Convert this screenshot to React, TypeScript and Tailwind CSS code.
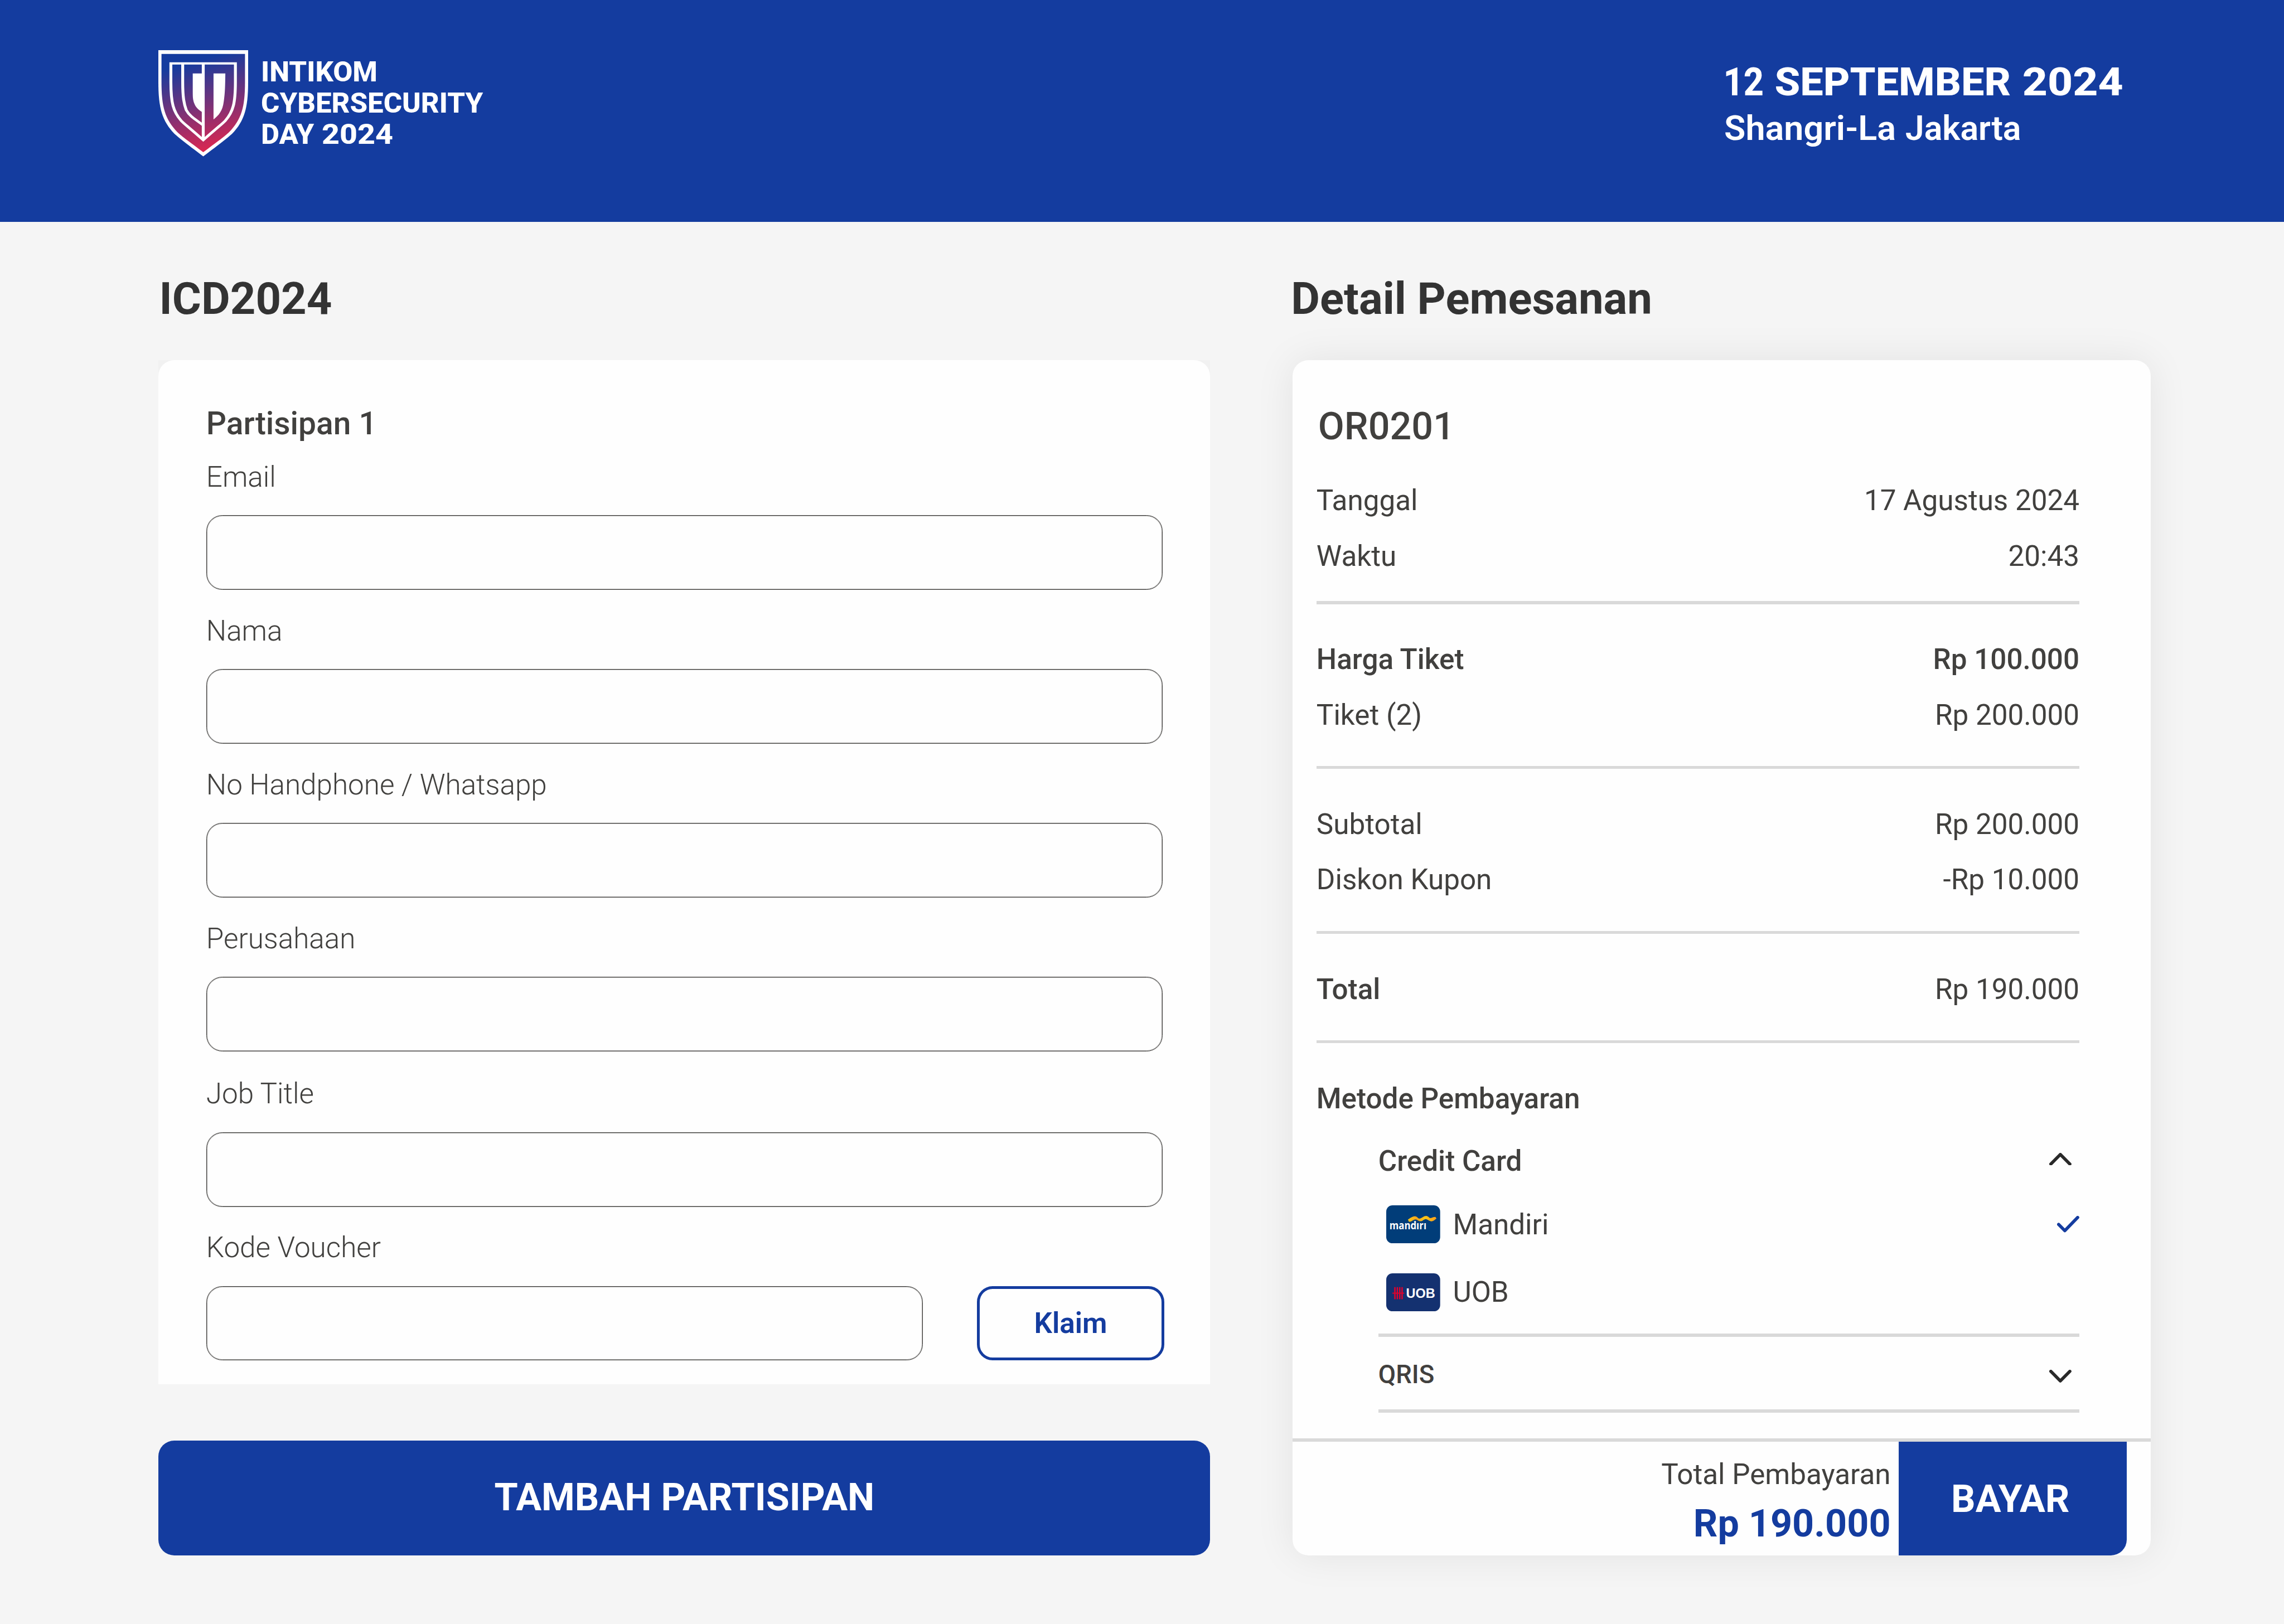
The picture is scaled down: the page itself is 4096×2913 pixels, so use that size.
import React from "react";

const fields = [
  { label: "Email" },
  { label: "Nama" },
  { label: "No Handphone / Whatsapp" },
  { label: "Perusahaan" },
];

function Shield() {
  return (
    <svg className="h-[67px] w-[56.6px] shrink-0" viewBox="0 0 402 603" preserveAspectRatio="none">
      <defs>
        <linearGradient id="shield" gradientUnits="userSpaceOnUse" x1="110" y1="80" x2="270" y2="560">
          <stop offset="0" stopColor="#143c9f" />
          <stop offset="1" stopColor="#dd2750" />
        </linearGradient>
      </defs>
      <path d="M0 0H402V180C402 330 385 400 330 475C315 492 300 508 201 603C102 508 87 492 72 475C17 400 0 330 0 180Z" fill="#fff" />
      <path d="M14 21H388V180C388 325 372 390 317 465C300 485 285 500 201 579C117 500 102 485 85 465C30 390 14 325 14 180Z" fill="url(#shield)" />
      <path d="M56 75H345V180C345 300 335 350 300 400C285 420 270 432 201 510C132 432 117 420 102 400C67 350 56 300 56 180Z" fill="none" stroke="#fff" strokeWidth="13" />
      <path d="M201 70V510" stroke="#fff" strokeWidth="13" />
      <path d="M109 76V180C109 270 115 305 125 340C137 368 150 380 201 426" fill="none" stroke="#fff" strokeWidth="13" />
      <path d="M154 132H201V356C175 335 168 325 160 300C154 280 154 260 154 230Z" fill="#fff" />
      <path d="M247 132H300C299 200 299 240 293 290C288 345 270 370 247 393Z" fill="#fff" />
    </svg>
  );
}

function LogoText() {
  return (
    <svg className="h-[70px] w-[150px]" viewBox="0 -8 150 70">
      <g fill="#fff" fontFamily="'Roboto', sans-serif" fontWeight="800" fontSize="17.4">
        <text x="0" y="13.3" textLength="73.5" lengthAdjust="spacingAndGlyphs">INTIKOM</text>
        <text x="0" y="33.1" textLength="140" lengthAdjust="spacingAndGlyphs">CYBERSECURITY</text>
        <text y="52.8">
          <tspan x="0" textLength="33.5" lengthAdjust="spacingAndGlyphs">DAY</tspan>{" "}
          <tspan x="38.3" textLength="45" lengthAdjust="spacingAndGlyphs">2024</tspan>
        </text>
      </g>
    </svg>
  );
}

function EventText() {
  return (
    <svg className="h-[70px] w-[260px]" viewBox="0 -8 260 70">
      <g fill="#fff" fontFamily="'Roboto', sans-serif">
        <text y="22.3" fontSize="24.7" fontWeight="800">
          <tspan x="-0.5" textLength="25.5" lengthAdjust="spacingAndGlyphs">12</tspan>{" "}
          <tspan x="31.8" textLength="149" lengthAdjust="spacingAndGlyphs">SEPTEMBER</tspan>{" "}
          <tspan x="188" textLength="63.6" lengthAdjust="spacingAndGlyphs">2024</tspan>
        </text>
        <text y="50.2" fontSize="21.3" fontWeight="600">
          <tspan x="0" textLength="108.3" lengthAdjust="spacingAndGlyphs">Shangri-La</tspan>{" "}
          <tspan x="114.2" textLength="73" lengthAdjust="spacingAndGlyphs">Jakarta</tspan>
        </text>
      </g>
    </svg>
  );
}

function Field({ label }: { label: string }) {
  return (
    <label className="flex flex-col">
      <span className="h-[35px] pt-[0.4px] text-[18px] leading-[21px] font-light">{label}</span>
      <input className="h-[47px] w-full rounded-[10px] border-[0.5px] border-[#41403e] bg-transparent px-4 shadow-[inset_0_0_0_0.36px_rgba(65,64,62,0.5)] outline-none" />
    </label>
  );
}

function Row({ left, right, boldLeft, boldRight }: { left: string; right: string; boldLeft?: boolean; boldRight?: boolean }) {
  return (
    <div className="flex h-[35px] items-center justify-between">
      <span className={boldLeft ? "font-medium" : ""}>{left}</span>
      <span className={boldRight ? "font-medium" : ""}>{right}</span>
    </div>
  );
}

function Divider() {
  return <div className="h-[2px] w-full shrink-0 bg-[#d9d9d9]" />;
}

function MandiriBadge() {
  return (
    <svg className="h-6 w-[34px]" viewBox="0 0 102 72">
      <defs>
        <linearGradient id="ribbon" x1="0" x2="1" y1="0" y2="0">
          <stop offset="0" stopColor="#fdc916" />
          <stop offset="0.3" stopColor="#fba61b" />
          <stop offset="0.6" stopColor="#fdc516" />
          <stop offset="1" stopColor="#f99d1c" />
        </linearGradient>
      </defs>
      <rect width="102" height="72" rx="12" fill="#013d79" />
      <path d="M41 27C47 23 51 20 56 21C60 22 60 26 64 25C69 23 71 20 76 20C81 21 81 25 85 24C88 23 90 22 93 22L95 25C91 28 88 31 84 30C80 29 78 26 74 26C70 27 68 31 63 30C59 29 58 26 54 27C50 28 47 32 43 31Z" fill="url(#ribbon)" />
      <text x="6" y="45.7" textLength="70" lengthAdjust="spacingAndGlyphs" fontFamily="'Open Sans', sans-serif" fontWeight="700" fontSize="20.5" fill="#fff">mandırı</text>
    </svg>
  );
}

function UobBadge() {
  return (
    <svg className="h-6 w-[34px]" viewBox="0 0 102 72">
      <rect width="102" height="72" rx="12" fill="#143170" />
      <path d="M16.4 26V49M21 26V49M25.6 26V49M30 26V49" stroke="#e4002b" strokeWidth="2.6" />
      <path d="M11.5 37.5H34" stroke="#e4002b" strokeWidth="2" />
      <text x="37.5" y="46.5" textLength="55" lengthAdjust="spacingAndGlyphs" fontFamily="'Liberation Sans', sans-serif" fontWeight="700" fontSize="26" fill="#fff">UOB</text>
    </svg>
  );
}

function Chevron({ up }: { up?: boolean }) {
  return (
    <svg className="mr-[5px] h-2 w-[14px]" viewBox="0 0 14 8" fill="none" stroke="#292929" strokeWidth="2" strokeLinecap="round" strokeLinejoin="round">
      <path d={up ? "M1 7L7 1L13 7" : "M1 1L7 7L13 1"} />
    </svg>
  );
}

export default function App() {
  return (
    <div className="h-[2913px] w-[4096px] overflow-hidden bg-[#f5f5f5]">
      <div className="flex h-[1025px] w-[1440px] flex-col font-['Roboto',sans-serif] text-[18px] leading-[21px] text-[#41403e] [zoom:2.84444]">
        <header className="flex h-[140px] shrink-0 items-start justify-between bg-[#143c9f] pr-[93px] pl-[100px]">
          <div className="flex pt-[31.7px]">
            <Shield />
            <div className="-mt-[1.7px] ml-[8px]">
              <LogoText />
            </div>
          </div>
          <div className="pt-[30px]">
            <EventText />
          </div>
        </header>

        <main className="flex grow items-start">
          <section className="ml-[100px] w-[663px]">
            <h1 className="mt-[32px] ml-[0.4px] h-[55px] text-[28px] leading-[33px] font-bold text-[#333]">ICD2024</h1>
            <div className="bg-[#f1f1f1]">
              <div className="flex h-[646px] flex-col rounded-t-[10px] bg-[#fefefe] px-[30px] pt-[28px]">
                <h2 className="h-[35px] pt-[0.4px] text-[20px] leading-[24px] font-medium">Partisipan 1</h2>
                <div className="flex flex-col gap-[15px]">
                  {fields.map((f) => (
                    <Field key={f.label} label={f.label} />
                  ))}
                  <div className="pt-px">
                    <Field label="Job Title" />
                  </div>
                  <div className="flex items-end justify-between">
                    <div className="w-[452px]">
                      <Field label="Kode Voucher" />
                    </div>
                    <button className="-mr-px h-[47px] w-[118px] rounded-[10px] border-2 border-[#143c9f] pt-[0.4px] font-semibold text-[#143c9f]">Klaim</button>
                  </div>
                </div>
              </div>
            </div>
            <button className="mt-[35.4px] h-[72.6px] w-full rounded-[10px] bg-[#143c9f] text-[24px] font-bold text-white">TAMBAH PARTISIPAN</button>
          </section>

          <section className="ml-[52px] w-[541px]">
            <h1 className="mt-[32px] -ml-px h-[55px] text-[28px] leading-[33px] font-bold text-[#333]">Detail Pemesanan</h1>
            <div className="flex h-[754px] flex-col rounded-[10px] bg-[#fefefe] shadow-[0_0_25px_rgba(0,0,0,0.08)]">
              <div className="flex h-[680px] flex-col pr-[45px] pl-[15px]">
                <h2 className="mt-[27.5px] ml-px h-[43.8px] text-[24px] leading-[29px] font-medium">OR0201</h2>
                <Row left="Tanggal" right="17 Agustus 2024" />
                <Row left="Waktu" right="20:43" />
                <div className="h-[10.7px]" />
                <Divider />
                <div className="h-[17.4px]" />
                <Row left="Harga Tiket" right="Rp 100.000" boldLeft boldRight />
                <Row left="Tiket (2)" right="Rp 200.000" />
                <div className="h-[14.6px]" />
                <Divider />
                <div className="h-[17.4px]" />
                <Row left="Subtotal" right="Rp 200.000" />
                <Row left="Diskon Kupon" right="-Rp 10.000" />
                <div className="h-[14.6px]" />
                <Divider />
                <div className="h-[17.6px]" />
                <Row left="Total" right="Rp 190.000" boldLeft />
                <div className="h-[14.4px]" />
                <Divider />
                <h3 className="mt-[24.5px] font-medium">Metode Pembayaran</h3>
                <div className="mt-[18.2px] ml-[39px] flex flex-col">
                  <div className="flex h-[21px] items-start justify-between font-medium">
                    Credit Card
                    <span className="mt-[5.3px] flex"><Chevron up /></span>
                  </div>
                  <div className="mt-[17.3px] flex h-6 items-center">
                    <span className="ml-[5px]"><MandiriBadge /></span>
                    <span className="mt-[0.5px] ml-2 grow">Mandiri</span>
                    <svg className="h-[10.4px] w-[14px]" viewBox="0 0 14 10.4" fill="none" stroke="#143c9f" strokeWidth="2" strokeLinecap="round" strokeLinejoin="round">
                      <path d="M1 5.4L4.9 9.3L13 1" />
                    </svg>
                  </div>
                  <div className="mt-[19px] flex h-6 items-center">
                    <span className="ml-[5px]"><UobBadge /></span>
                    <span className="ml-2">UOB</span>
                  </div>
                  <div className="h-[14px]" />
                  <Divider />
                  <div className="flex h-[46px] items-center justify-between pt-[2px] text-[16px] font-medium">
                    QRIS
                    <span className="mt-[2px] flex"><Chevron /></span>
                  </div>
                  <Divider />
                </div>
              </div>
              <Divider />
              <div className="flex h-[72px] justify-end pr-[15px]">
                <div className="flex flex-col items-end pr-[5px]">
                  <span className="mt-[10.4px] h-[27.6px]">Total Pembayaran</span>
                  <span className="text-[24px] leading-[28px] font-bold text-[#143c9f]">Rp 190.000</span>
                </div>
                <button className="h-[72px] w-[144px] rounded-br-[10px] bg-[#143c9f] pt-[1.2px] pr-[3px] text-[24px] font-bold text-white">BAYAR</button>
              </div>
            </div>
          </section>
        </main>
      </div>
    </div>
  );
}
